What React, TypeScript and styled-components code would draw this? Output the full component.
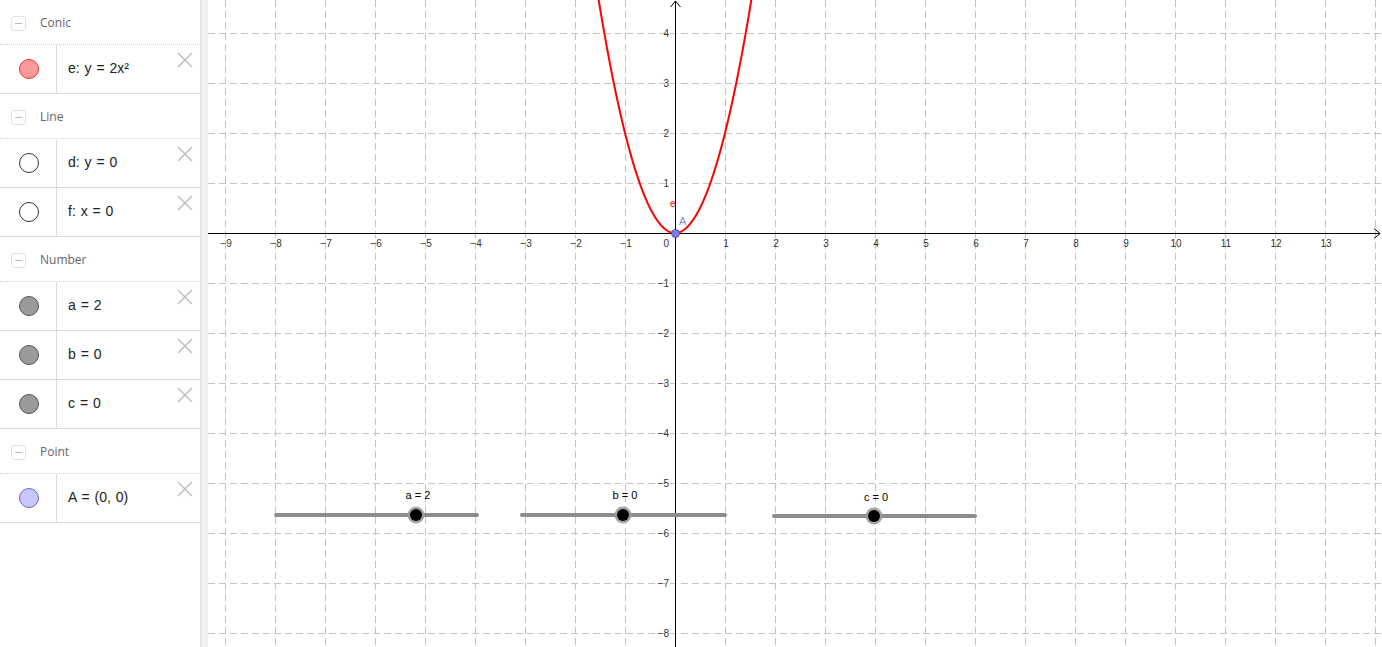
import React from "react";
import styled, { createGlobalStyle } from "styled-components";

const GlobalStyle = createGlobalStyle`
  html, body {
    margin: 0;
    padding: 0;
    height: 100%;
    overflow: hidden;
    background: #fff;
  }
  body {
    font-family: "Open Sans", "Liberation Sans", Arial, sans-serif;
  }
  #root {
    height: 100%;
  }
`;

type Marker = "conic" | "line" | "number" | "point";

const markerColors: Record<Marker, { fill: string; border: string }> = {
  conic: { fill: "#ff9a9a", border: "#f03030" },
  line: { fill: "#ffffff", border: "#333333" },
  number: { fill: "#9a9a9a", border: "#555555" },
  point: { fill: "#c8c8ff", border: "#6666cc" },
};

const groups: { title: string; marker: Marker; items: string[] }[] = [
  { title: "Conic", marker: "conic", items: ["e: y = 2x²"] },
  { title: "Line", marker: "line", items: ["d: y = 0", "f: x = 0"] },
  { title: "Number", marker: "number", items: ["a = 2", "b = 0", "c = 0"] },
  { title: "Point", marker: "point", items: ["A = (0, 0)"] },
];

const Page = styled.div`
  display: flex;
  width: 1382px;
  height: 647px;
  overflow: hidden;
`;

const Algebra = styled.div`
  width: 200px;
  flex-shrink: 0;
  background: #fff;
  display: flex;
  flex-direction: column;
`;

const GroupHeader = styled.div`
  height: 44px;
  display: flex;
  align-items: center;
  gap: 14px;
  padding-left: 11px;
  border-bottom: 1px dotted #cfcfcf;
  color: #666;
  font-size: 12px;
`;

const Toggle = styled.span`
  width: 13px;
  height: 13px;
  border: 1px solid #e2e2e2;
  border-radius: 3px;
  display: flex;
  align-items: center;
  justify-content: center;
  margin-top: 2px;

  &::before {
    content: "";
    width: 7px;
    height: 1px;
    background: #bbb;
  }
`;

const Row = styled.div`
  height: 48px;
  display: flex;
  border-bottom: 1px solid #dcdcdc;
  position: relative;
`;

const MarkerCell = styled.div`
  width: 56px;
  flex-shrink: 0;
  border-right: 1px solid #dcdcdc;
  display: flex;
  align-items: center;
  justify-content: center;
`;

const Dot = styled.span<{ $kind: Marker }>`
  width: 18px;
  height: 18px;
  border-radius: 50%;
  background: ${(p) => markerColors[p.$kind].fill};
  border: 1px solid ${(p) => markerColors[p.$kind].border};
  margin-left: 1px;
`;

const Formula = styled.div`
  display: flex;
  align-items: center;
  padding-left: 11px;
  padding-bottom: 2px;
  font-family: "Liberation Sans", Arial, sans-serif;
  font-size: 14px;
  color: #222;
  word-spacing: 1px;
`;

const Close = styled.span`
  position: absolute;
  right: 7px;
  top: 6px;
  width: 16px;
  height: 16px;
`;

const Splitter = styled.div`
  width: 7px;
  flex-shrink: 0;
  background: #efefef;
  border-left: 1px solid #e0e0e0;
  display: flex;
  justify-content: center;

  &::before {
    content: "";
    width: 1px;
    height: 100%;
    background: repeating-linear-gradient(
      to bottom,
      #fbfbfb 0 2px,
      transparent 2px 4px
    );
  }
`;

const Graphics = styled.div`
  flex: 1;
  background: #fff;
  position: relative;
`;

const W = 1174;
const H = 647;
const OX = 467;
const OY = 233;
const U = 50;

const fmt = (n: number) => (n < 0 ? `−${-n}` : `${n}`);

const Slider = ({
  x1,
  x2,
  y,
  knob,
  label,
  ly,
}: {
  x1: number;
  x2: number;
  y: number;
  knob: number;
  label: string;
  ly: number;
}) => (
  <g>
    <line x1={x1} y1={y} x2={x2} y2={y} stroke="#8c8c8c" strokeWidth={4} strokeLinecap="round" />
    <circle cx={knob} cy={y} r={8.5} fill="#9a9a9a" opacity={0.9} />
    <circle cx={knob} cy={y} r={6} fill="#000" />
    <text x={knob + 2} y={ly} fontSize={11} textAnchor="middle" fill="#000" fontFamily="Liberation Sans, Arial, sans-serif">
      {label}
    </text>
  </g>
);

const Plane = () => {
  const xs: number[] = [];
  for (let k = -9; k <= 14; k++) xs.push(OX + k * U);
  const ys: number[] = [];
  for (let k = -4; k <= 8; k++) ys.push(OY + k * U);

  const pts: string[] = [];
  for (let px = -2; px <= 2; px += 0.01) {
    const sx = OX + px * U;
    const sy = OY - 2 * px * px * U;
    if (sy > -20) pts.push(`${sx.toFixed(2)},${sy.toFixed(2)}`);
  }

  const labelFont = "Liberation Sans, Arial, sans-serif";

  return (
    <svg width={W} height={H} viewBox={`0 0 ${W} ${H}`} style={{ display: "block" }}>
      <g stroke="#c4c4c4" strokeWidth={1} strokeDasharray="7 4">
        {xs.map((x) => (
          <line key={`v${x}`} x1={x + 0.5} y1={0} x2={x + 0.5} y2={H} />
        ))}
        {ys.map((y) => (
          <line key={`h${y}`} x1={0} y1={y + 0.5} x2={W} y2={y + 0.5} />
        ))}
      </g>
      <line x1={0} y1={OY + 0.5} x2={W - 2} y2={OY + 0.5} stroke="#000" strokeWidth={1} />
      <polyline points={`${W - 8},${OY - 4.5} ${W - 2},${OY + 0.5} ${W - 8},${OY + 5.5}`} fill="none" stroke="#000" />
      <line x1={OX + 0.5} y1={1} x2={OX + 0.5} y2={H} stroke="#000" strokeWidth={1} />
      <polyline points={`${OX - 4.5},7 ${OX + 0.5},1 ${OX + 5.5},7`} fill="none" stroke="#000" />

      <g fontSize={10} fill="#333" fontFamily={labelFont}>
        {Array.from({ length: 23 }, (_, i) => i - 9)
          .filter((k) => k !== 0)
          .map((k) => (
            <text key={`xl${k}`} x={OX + k * U + 1} y={OY + 14} textAnchor="middle">
              {fmt(k)}
            </text>
          ))}
        <text x={OX - 6} y={OY + 14} textAnchor="end">0</text>
        {Array.from({ length: 13 }, (_, i) => 4 - i)
          .filter((k) => k !== 0)
          .map((k) => (
            <text key={`yl${k}`} x={OX - 6} y={OY - k * U + 4} textAnchor="end">
              {fmt(k)}
            </text>
          ))}
      </g>

      <polyline points={pts.join(" ")} fill="none" stroke="#ff0000" strokeWidth={2} />
      <text x={OX - 5} y={OY - 26} fontSize={10} fill="#ff0000" fontFamily={labelFont}>e</text>

      <circle cx={OX + 0.5} cy={OY + 0.5} r={4} fill="#7b7be0" stroke="#4444aa" strokeWidth={0.8} />
      <text x={OX + 4} y={OY - 8} fontSize={11} fill="#8888e0" fontFamily={labelFont}>A</text>

      <Slider x1={68} x2={269} y={515} knob={208} label="a = 2" ly={499} />
      <Slider x1={314} x2={517} y={515} knob={415} label="b = 0" ly={499} />
      <Slider x1={566} x2={767} y={516} knob={666} label="c = 0" ly={501} />
    </svg>
  );
};

const CloseIcon = () => (
  <Close>
    <svg width="16" height="16" viewBox="0 0 16 16">
      <path d="M1 1 L15 15 M15 1 L1 15" stroke="#c2c2c2" strokeWidth="1.6" />
    </svg>
  </Close>
);

export default function App() {
  return (
    <>
      <GlobalStyle />
      <Page>
        <Algebra>
          {groups.map((g) => (
            <React.Fragment key={g.title}>
              <GroupHeader>
                <Toggle />
                <span>{g.title}</span>
              </GroupHeader>
              {g.items.map((item) => (
                <Row key={item}>
                  <MarkerCell>
                    <Dot $kind={g.marker} />
                  </MarkerCell>
                  <Formula>{item}</Formula>
                  <CloseIcon />
                </Row>
              ))}
            </React.Fragment>
          ))}
        </Algebra>
        <Splitter />
        <Graphics>
          <Plane />
        </Graphics>
      </Page>
    </>
  );
}
